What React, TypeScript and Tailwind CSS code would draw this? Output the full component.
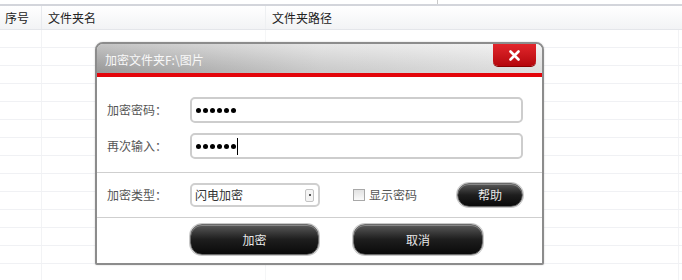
import React from "react";

const font = { fontFamily: '"Noto Sans CJK SC", "Noto Sans", sans-serif' };

function Row() {
  return (
    <div className="flex h-[18px] border-b border-[#f0f1f4]">
      <div className="w-[42px] border-r border-[#f2f3f5]" />
      <div className="w-[224px] border-r border-[#f5f6f7]" />
      <div className="flex-1 border-r border-[#f2f3f5] mr-[3px]" />
    </div>
  );
}

function Dots() {
  return (
    <div className="flex items-center gap-[2px]">
      {Array.from({ length: 6 }).map((_, i) => (
        <div key={i} className="w-[5px] h-[5px] rounded-full bg-black" />
      ))}
    </div>
  );
}

function DarkButton({ label, className }: { label: string; className: string }) {
  return (
    <div
      className={
        "flex items-center justify-center border border-[#6a6a6a] bg-gradient-to-b from-[#5a5a5a] via-[#1e1e1e] to-[#0a0a0a] text-[12px] text-[#e8e8e8] shadow-[0_0_0_1px_#c8c8c8,inset_0_1px_0_#888] " +
        className
      }
    >
      {label}
    </div>
  );
}

export default function App() {
  const rows = Array.from({ length: 14 });
  return (
    <div className="relative w-[682px] h-[280px] overflow-hidden bg-white text-[#333]" style={font}>
      {/* top strip */}
      <div className="flex h-[4px]">
        <div className="ml-[437px] w-px h-full bg-[#c9c9c9]" />
      </div>
      {/* header */}
      <div className="flex h-[26px] items-center border-t-2 border-b border-t-[#d3d5db] border-b-[#e4e6ea] bg-gradient-to-b from-white to-[#f2f3f5] text-[12px] text-[#222]">
        <div className="w-[42px] h-full flex items-center pl-[5px] border-r border-[#e8eaee]">序号</div>
        <div className="w-[224px] h-full flex items-center pl-[6px] border-r border-[#eef0f2]">文件夹名</div>
        <div className="flex-1 h-full flex items-center pl-[6px]">文件夹路径</div>
      </div>
      {rows.map((_, i) => (
        <Row key={i} />
      ))}

      {/* dialog */}
      <div className="absolute left-[95px] top-[42px] w-[449px] h-[223px] flex flex-col border-2 border-[#8c8c8c] rounded-t-[8px] rounded-b-[2px] bg-white overflow-hidden shadow-[0_0_2px_rgba(0,0,0,0.2)]">
        <div className="relative h-[29px] shrink-0 flex items-center pl-[8px] bg-gradient-to-r from-[#a4a4a4] via-[#d8d8d8] to-[#eeeeee]">
          <div className="absolute inset-0 bg-gradient-to-b from-[rgba(255,255,255,0.35)] to-[rgba(0,0,0,0.06)]" />
          <span className="relative text-[12px] text-[#f8f8f8] pt-[2px]">加密文件夹F:\图片</span>
          <div className="absolute right-[6px] top-0 w-[43px] h-[22px] rounded-b-[5px] bg-gradient-to-b from-[#e2252b] to-[#b5060c] flex items-center justify-center shadow-[0_1px_0_#8a0000]">
            <svg width="11" height="11" viewBox="0 0 11 11">
              <path d="M1.5 1.5 L9.5 9.5 M9.5 1.5 L1.5 9.5" stroke="#fff" strokeWidth="2.6" strokeLinecap="round" />
            </svg>
          </div>
        </div>
        <div className="h-[4px] shrink-0 bg-[#e3050b]" />

        <div className="flex flex-col pt-[20px] text-[12px] text-[#555]">
          <div className="flex items-center h-[26px] pl-[10px] pr-[19px]">
            <div className="w-[83px]">加密密码：</div>
            <div className="flex-1 h-[26px] flex items-center border-2 border-[#cdcdcd] rounded-[5px] pl-[4px]">
              <Dots />
            </div>
          </div>
          <div className="flex items-center h-[26px] mt-[10px] pl-[10px] pr-[19px]">
            <div className="w-[83px]">再次输入：</div>
            <div className="flex-1 h-[26px] flex items-center border-2 border-[#cdcdcd] rounded-[5px] pl-[4px]">
              <Dots />
              <span className="ml-[1px] w-px h-[17px] bg-black" />
            </div>
          </div>
          <div className="mt-[13px] h-px bg-[#cfcfcf]" />
          <div className="flex items-center h-[44px] pl-[10px]">
            <div className="w-[83px]">加密类型：</div>
            <div className="w-[130px] h-[24px] flex items-center justify-between border-2 border-[#cfcfcf] rounded-[5px] pl-[3px] pr-[4px] text-[#333]">
              <span>闪电加密</span>
              <div className="w-[9px] h-[13px] border border-[#c4c4c4] rounded-[2px] bg-[#f4f4f4] flex items-center justify-center">
                <div className="w-[2px] h-[2px] bg-[#555]" />
              </div>
            </div>
            <div className="ml-[33px] flex items-center">
              <div className="w-[12px] h-[12px] border border-[#a8a8a8] bg-gradient-to-b from-[#e2e2e2] to-[#fafafa]" />
              <span className="ml-[4px]">显示密码</span>
            </div>
            <DarkButton label="帮助" className="ml-[40px] w-[66px] h-[24px] rounded-full" />
          </div>
          <div className="h-px bg-[#cfcfcf]" />
          <div className="flex items-center h-[43px] pl-[93px]">
            <DarkButton label="加密" className="w-[129px] h-[31px] rounded-[12px]" />
            <DarkButton label="取消" className="ml-[34px] w-[130px] h-[31px] rounded-[12px]" />
          </div>
        </div>
      </div>
    </div>
  );
}
